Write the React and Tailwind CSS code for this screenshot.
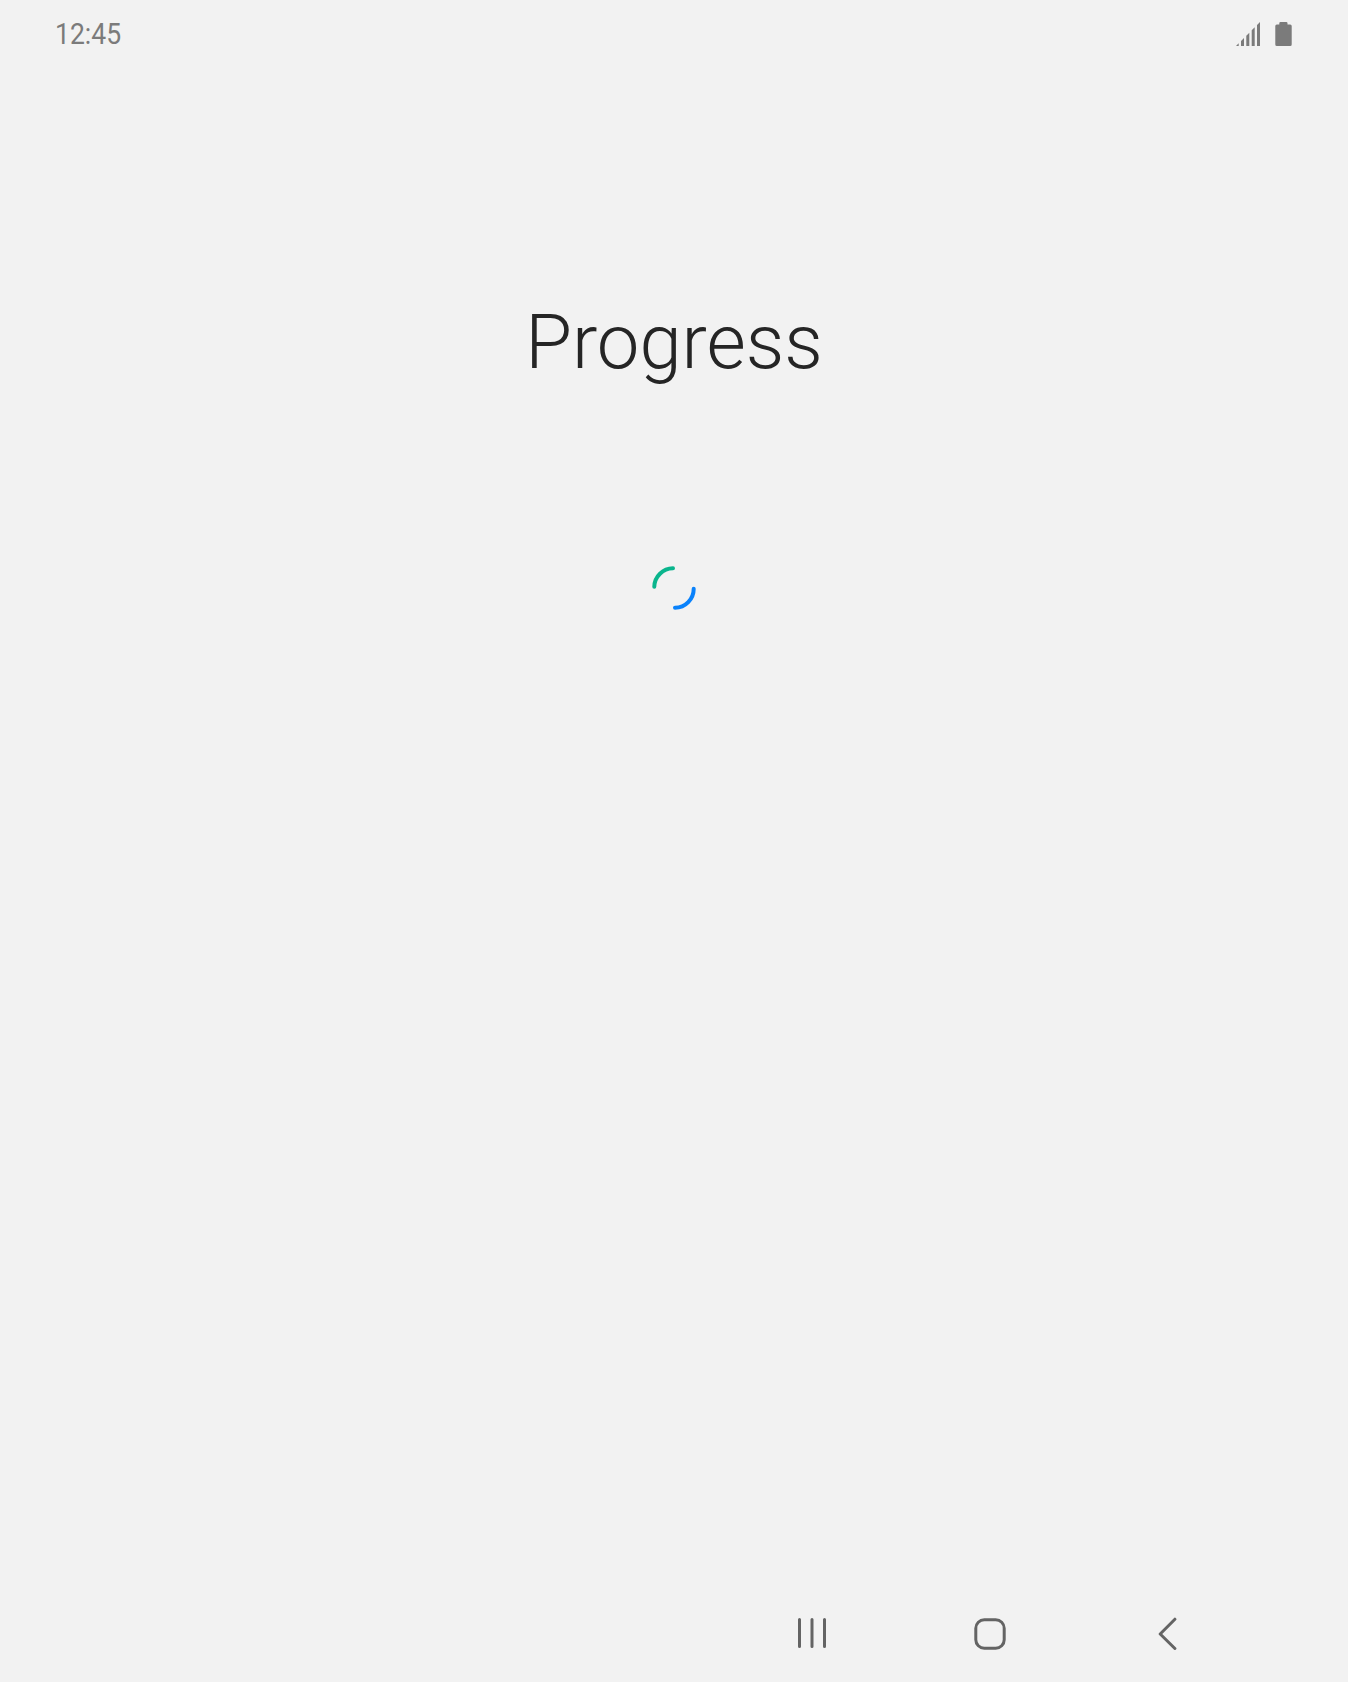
function SignalIcon() {
  return (
    <svg width="24" height="24" viewBox="0 0 24 24" fill="#7b7b7b">
      <path d="M0 24L2.7 21.3V24ZM5 24V19L8 16V24ZM10.3 24V13.7L13.3 10.7V24ZM15.7 24V8.3L18.7 5.3V24ZM21 24V3L24 0V24Z" />
    </svg>
  );
}

function BatteryIcon() {
  return (
    <svg width="17" height="24" viewBox="0 0 17 24" fill="#7b7b7b">
      <path d="M5.5 0H11.3Q12.5 0 12.5 1.2V2.5H15.2Q16.7 2.5 16.7 4V22.5Q16.7 24 15.2 24H1.8Q.3 24 .3 22.5V4Q.3 2.5 1.8 2.5H4.3V1.2Q4.3 0 5.5 0Z" />
    </svg>
  );
}

function Spinner() {
  return (
    <svg width="44" height="44" viewBox="0 0 44 44" fill="none" strokeWidth="4" strokeLinecap="round">
      <path d="M2.3 20.7A18.9 18.9 0 0 1 21 2.3" stroke="#0ab58d" />
      <path d="M41.7 22.7A18.9 18.9 0 0 1 23 41.7" stroke="#0a82fb" />
    </svg>
  );
}

export default function App() {
  return (
    <div className="flex h-[1682px] w-[1348px] flex-col bg-[#f2f2f2] font-['Roboto',sans-serif]">
      <header className="flex h-[68px] justify-between pr-14 pl-[55px]">
        <span className="mt-4 h-9 origin-left scale-x-[0.885] text-[30px] leading-9 text-[#7b7b7b]">12:45</span>
        <div className="mt-[22px] flex h-6 gap-[15px]">
          <SignalIcon />
          <BatteryIcon />
        </div>
      </header>
      <main className="flex flex-1 flex-col items-center pt-[230px]">
        <h1 className="text-[76px] leading-[88px] font-light text-[#252525]">Progress</h1>
        <div className="mt-[180px]">
          <Spinner />
        </div>
      </main>
      <nav className="flex h-[98px] items-center justify-end pr-[168px]">
        <button aria-label="Recents" className="mr-[146px]">
          <svg className="block" width="32" height="34" viewBox="0 0 32 34" fill="none" stroke="#646464" strokeWidth="3" strokeLinecap="round">
            <path d="M3.5 3.5V30.5M16 3.5V30.5M28.5 3.5V30.5" />
          </svg>
        </button>
        <button aria-label="Home" className="mr-[150px]">
          <svg className="block" width="32" height="34" viewBox="0 0 32 34" fill="none" stroke="#646464" strokeWidth="3">
            <rect x="1.8" y="3.8" width="28.4" height="28.4" rx="8.5" />
          </svg>
        </button>
        <button aria-label="Back">
          <svg className="block" width="24" height="34" viewBox="0 0 24 34" fill="none" stroke="#646464" strokeWidth="3" strokeLinecap="round" strokeLinejoin="round">
            <path d="M18.9 3.2L4.2 18L18.9 32.5" />
          </svg>
        </button>
      </nav>
    </div>
  );
}
